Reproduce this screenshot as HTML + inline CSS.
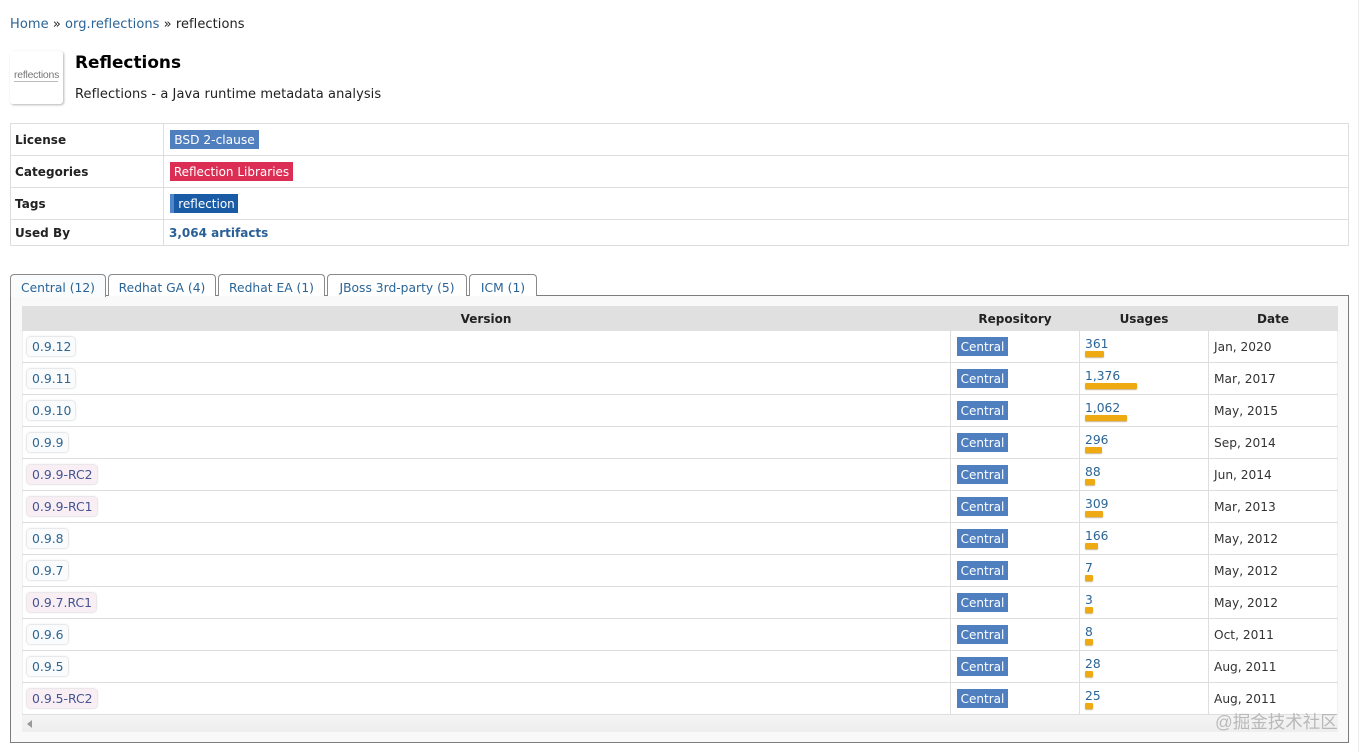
<!DOCTYPE html>
<html><head><meta charset="utf-8">
<style>
html,body{margin:0;padding:0;background:#fff;width:1361px;height:752px;overflow:hidden}
body{position:relative;font-family:"DejaVu Sans",Verdana,sans-serif;font-size:13px;color:#222}
div,span,a{position:absolute;white-space:nowrap;box-sizing:border-box}
.t{line-height:18px;height:18px}
.l{color:#2a6496}
.b{font-weight:bold}
.ln{background:#dedede}
.tag{color:#fff;line-height:21px;height:19px;text-align:center;font-size:12px}
.tab{top:274px;height:22px;border:1px solid #8a8a8a;border-bottom:0;border-radius:4px 4px 0 0;background:#fff;color:#2a6496;line-height:26px;text-align:center;font-size:12.3px}
.v{left:27px;height:19px;line-height:20px;border-radius:3px;background:#f9fbfd;box-shadow:0 0 2px #bbb;color:#2f6690;padding:0 4px 0 5px;font-size:12.4px}
.v.r{background:#f8eef4;color:#42548f}
.c{left:957px;width:51px;height:19px;line-height:21px;background:#4f7fbf;color:#fff;text-align:center;font-size:12px}
.u{left:1085px;color:#2a6496;line-height:16px;height:16px;font-size:12.3px}
.bar{left:1085px;height:6px;background:#eea913;border-radius:1px;box-shadow:0 1px 1px #c9b48a}
.d{left:1214px;line-height:20px;font-size:12.2px;color:#333}
.th{top:310px;line-height:18px;font-weight:bold;color:#222;text-align:center;font-size:12px}
.lab{font-size:12px;left:15px;letter-spacing:.05px}
</style></head><body>
<div class="t" style="left:10px;top:16px;letter-spacing:.06px"><span class="l" style="position:static">Home</span> » <span class="l" style="position:static">org.reflections</span> » reflections</div>

<div style="left:10px;top:51px;width:53px;height:53px;background:#fff;border-radius:3px;box-shadow:1px 1px 2px #b5b5b5"></div>
<div style="left:14px;top:69px;font-family:'Liberation Sans',sans-serif;font-size:10.5px;line-height:13px;color:#777;letter-spacing:-.25px">reflections</div>
<div style="left:14px;top:81px;width:44px;height:1px;background:#bbb"></div>
<div class="t b" style="left:75px;top:52px;font-size:16.9px;line-height:20px;height:20px;color:#000">Reflections</div>
<div class="t" style="left:75px;top:86px;letter-spacing:.065px">Reflections - a Java runtime metadata analysis</div>

<div style="left:10px;top:123px;width:1339px;height:123px;border:1px solid #dedede"></div>
<div class="ln" style="left:10px;top:155px;width:1339px;height:1px"></div>
<div class="ln" style="left:10px;top:187px;width:1339px;height:1px"></div>
<div class="ln" style="left:10px;top:219px;width:1339px;height:1px"></div>
<div class="ln" style="left:163px;top:123px;width:1px;height:123px"></div>
<div class="t b lab" style="top:131px">License</div>
<div class="t b lab" style="top:163px">Categories</div>
<div class="t b lab" style="top:195px">Tags</div>
<div class="t b lab" style="top:224px">Used By</div>
<div class="tag" style="left:170px;top:130px;width:89px;background:#4f7fbf;font-size:12.2px">BSD 2-clause</div>
<div class="tag" style="left:170px;top:162px;width:123px;background:#dc2e55">Reflection Libraries</div>
<div class="tag" style="left:170px;top:194px;width:68px;background:#1a5ba6;border-left:4px solid #4f86cc;padding-left:1px">reflection</div>
<div class="t b" style="left:169px;top:224px;color:#2a5f96;font-size:12px">3,064 artifacts</div>

<div style="left:10px;top:295px;width:1339px;height:448px;border:1px solid #7d7d7d;background:#f9f9f9"></div>
<div class="tab" style="left:10px;width:96px;height:23px;background:#f9fbfc;z-index:2">Central (12)</div>
<div class="tab" style="left:108px;width:108px">Redhat GA (4)</div>
<div class="tab" style="left:218px;width:107px">Redhat EA (1)</div>
<div class="tab" style="left:327px;width:140px">JBoss 3rd-party (5)</div>
<div class="tab" style="left:469px;width:68px">ICM (1)</div>

<div style="left:22px;top:306px;width:1316px;height:25px;background:#e0e0e0"></div>
<div style="left:22px;top:331px;width:1316px;height:384px;background:#fff"></div>
<div class="th" style="left:22px;width:928px">Version</div>
<div class="th" style="left:951px;width:128px">Repository</div>
<div class="th" style="left:1080px;width:128px">Usages</div>
<div class="th" style="left:1209px;width:128px">Date</div>

<div class="ln" style="left:950px;top:331px;width:1px;height:384px"></div>
<div class="ln" style="left:1079px;top:331px;width:1px;height:384px"></div>
<div class="ln" style="left:1208px;top:331px;width:1px;height:384px"></div>
<div class="ln" style="left:1337px;top:331px;width:1px;height:384px;background:#eee"></div>
<div class="ln" style="left:22px;top:331px;width:1px;height:384px;background:#eee"></div>

<div class="ln" style="left:22px;top:362px;width:1316px;height:1px"></div>
<div class="ln" style="left:22px;top:394px;width:1316px;height:1px"></div>
<div class="ln" style="left:22px;top:426px;width:1316px;height:1px"></div>
<div class="ln" style="left:22px;top:458px;width:1316px;height:1px"></div>
<div class="ln" style="left:22px;top:490px;width:1316px;height:1px"></div>
<div class="ln" style="left:22px;top:522px;width:1316px;height:1px"></div>
<div class="ln" style="left:22px;top:554px;width:1316px;height:1px"></div>
<div class="ln" style="left:22px;top:586px;width:1316px;height:1px"></div>
<div class="ln" style="left:22px;top:618px;width:1316px;height:1px"></div>
<div class="ln" style="left:22px;top:650px;width:1316px;height:1px"></div>
<div class="ln" style="left:22px;top:682px;width:1316px;height:1px"></div>
<div class="ln" style="left:22px;top:714px;width:1316px;height:1px"></div>

<div class="v" style="top:337px">0.9.12</div><div class="c" style="top:337px">Central</div><div class="u" style="top:336px">361</div><div class="bar" style="top:351px;width:19px"></div><div class="d" style="top:337px">Jan, 2020</div>
<div class="v" style="top:369px">0.9.11</div><div class="c" style="top:369px">Central</div><div class="u" style="top:368px">1,376</div><div class="bar" style="top:383px;width:52px"></div><div class="d" style="top:369px">Mar, 2017</div>
<div class="v" style="top:401px">0.9.10</div><div class="c" style="top:401px">Central</div><div class="u" style="top:400px">1,062</div><div class="bar" style="top:415px;width:42px"></div><div class="d" style="top:401px">May, 2015</div>
<div class="v" style="top:433px">0.9.9</div><div class="c" style="top:433px">Central</div><div class="u" style="top:432px">296</div><div class="bar" style="top:447px;width:17px"></div><div class="d" style="top:433px">Sep, 2014</div>
<div class="v r" style="top:465px">0.9.9-RC2</div><div class="c" style="top:465px">Central</div><div class="u" style="top:464px">88</div><div class="bar" style="top:479px;width:10px"></div><div class="d" style="top:465px">Jun, 2014</div>
<div class="v r" style="top:497px">0.9.9-RC1</div><div class="c" style="top:497px">Central</div><div class="u" style="top:496px">309</div><div class="bar" style="top:511px;width:18px"></div><div class="d" style="top:497px">Mar, 2013</div>
<div class="v" style="top:529px">0.9.8</div><div class="c" style="top:529px">Central</div><div class="u" style="top:528px">166</div><div class="bar" style="top:543px;width:13px"></div><div class="d" style="top:529px">May, 2012</div>
<div class="v" style="top:561px">0.9.7</div><div class="c" style="top:561px">Central</div><div class="u" style="top:560px">7</div><div class="bar" style="top:575px;width:8px"></div><div class="d" style="top:561px">May, 2012</div>
<div class="v r" style="top:593px">0.9.7.RC1</div><div class="c" style="top:593px">Central</div><div class="u" style="top:592px">3</div><div class="bar" style="top:607px;width:8px"></div><div class="d" style="top:593px">May, 2012</div>
<div class="v" style="top:625px">0.9.6</div><div class="c" style="top:625px">Central</div><div class="u" style="top:624px">8</div><div class="bar" style="top:639px;width:8px"></div><div class="d" style="top:625px">Oct, 2011</div>
<div class="v" style="top:657px">0.9.5</div><div class="c" style="top:657px">Central</div><div class="u" style="top:656px">28</div><div class="bar" style="top:671px;width:8px"></div><div class="d" style="top:657px">Aug, 2011</div>
<div class="v r" style="top:689px">0.9.5-RC2</div><div class="c" style="top:689px">Central</div><div class="u" style="top:688px">25</div><div class="bar" style="top:703px;width:8px"></div><div class="d" style="top:689px">Aug, 2011</div>

<div style="left:22px;top:715px;width:1316px;height:17px;background:linear-gradient(#f4f4f4,#eee)"></div>
<div style="left:27px;top:720px;width:0;height:0;border:4px solid transparent;border-left:0;border-right:5px solid #999"></div>
<div style="left:1215px;top:711px;font-family:'Liberation Sans','Noto Sans CJK SC',sans-serif;font-size:17.5px;line-height:22px;color:#b9b9b9">@掘金技术社区</div>
<div style="left:1358px;top:0;width:1px;height:752px;background:#ececec"></div>
</body></html>
